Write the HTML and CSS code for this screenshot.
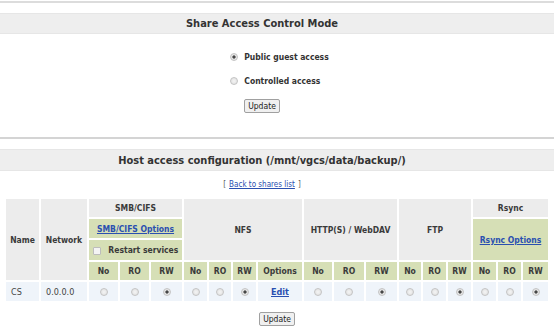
FILE: index.html
```html
<!DOCTYPE html>
<html lang="en">
<head>
  <meta charset="UTF-8" />
  <title>Share access</title>
  <link rel="stylesheet" href="styles.css">
</head>
<body>
  <div class="top-line"></div>

  <h2 class="section-title first">Share Access Control Mode</h2>
  <form class="mode-form">
    <div class="mode-options">
      <label class="mode-option"><input type="radio" name="mode" checked> Public guest access</label>
      <label class="mode-option"><input type="radio" name="mode"> Controlled access</label>
    </div>
    <button type="button" class="update-btn">Update</button>
  </form>

  <hr class="divider">

  <h2 class="section-title second">Host access configuration (/mnt/vgcs/data/backup/)</h2>
  <p class="back-link">[ <a href="#">Back to shares list</a> ]</p>

  <table class="access-table">
    <colgroup>
      <col style="width: 33px"><col style="width: 46px">
      <col style="width: 29px"><col style="width: 29px"><col style="width: 31px">
      <col style="width: 23px"><col style="width: 22px"><col style="width: 23px"><col style="width: 44px">
      <col style="width: 28px"><col style="width: 30px"><col style="width: 31px">
      <col style="width: 22px"><col style="width: 23px"><col style="width: 23px">
      <col style="width: 23px"><col style="width: 23px"><col style="width: 25px">
    </colgroup>
    <tr>
      <th rowspan="4">Name</th>
      <th rowspan="4">Network</th>
      <th colspan="3">SMB/CIFS</th>
      <th colspan="4" rowspan="3">NFS</th>
      <th colspan="3" rowspan="3">HTTP(S) / WebDAV</th>
      <th colspan="3" rowspan="3">FTP</th>
      <th colspan="3">Rsync</th>
    </tr>
    <tr>
      <th colspan="3" class="green"><a href="#">SMB/CIFS Options</a></th>
      <th colspan="3" rowspan="2" class="green"><a href="#">Rsync Options</a></th>
    </tr>
    <tr>
      <th colspan="3" class="green restart"><input type="checkbox"> Restart services</th>
    </tr>
    <tr class="sub">
      <th class="green">No</th><th class="green">RO</th><th class="green">RW</th>
      <th class="green">No</th><th class="green">RO</th><th class="green">RW</th><th class="green">Options</th>
      <th class="green">No</th><th class="green">RO</th><th class="green">RW</th>
      <th class="green">No</th><th class="green">RO</th><th class="green">RW</th>
      <th class="green">No</th><th class="green">RO</th><th class="green">RW</th>
    </tr>
    <tr class="data-row">
      <td class="left">CS</td>
      <td class="left">0.0.0.0</td>
      <td><input type="radio" name="smb"></td><td><input type="radio" name="smb"></td><td><input type="radio" name="smb" checked></td>
      <td><input type="radio" name="nfs"></td><td><input type="radio" name="nfs"></td><td><input type="radio" name="nfs" checked></td><td><a href="#" class="edit">Edit</a></td>
      <td><input type="radio" name="http"></td><td><input type="radio" name="http"></td><td><input type="radio" name="http" checked></td>
      <td><input type="radio" name="ftp"></td><td><input type="radio" name="ftp"></td><td><input type="radio" name="ftp" checked></td>
      <td><input type="radio" name="rsync"></td><td><input type="radio" name="rsync"></td><td><input type="radio" name="rsync" checked></td>
    </tr>
  </table>

  <div class="bottom-actions">
    <button type="button" class="update-btn">Update</button>
  </div>
</body>
</html>
```

FILE: styles.css
```css
* {
  box-sizing: border-box;
}

body {
  margin: 0;
  font-family: "DejaVu Sans Condensed", "DejaVu Sans", Verdana, sans-serif;
  color: #333;
  background-color: white;
}

.top-line {
  margin-top: 1px;
  height: 2px;
  background-color: #dcdcdc;
}

.section-title {
  margin: 0;
  height: 21px;
  padding-right: 30px;
  display: flex;
  align-items: center;
  justify-content: center;
  background-color: #eeeeee;
  border-top: 1px solid #e6e6e6;
  border-bottom: 1px solid #e6e6e6;
  font-size: 11px;
  font-weight: bold;
  color: #333;
}

.section-title.first {
  margin-top: 10px;
}

.section-title.second {
  margin-top: 10px;
  height: 22px;
}

.mode-form {
  display: flex;
  flex-direction: column;
  align-items: center;
  padding-top: 11px;
  padding-right: 30px;
}

.mode-options {
  display: flex;
  flex-direction: column;
  align-items: flex-start;
  margin-left: 35px;
}

.mode-option {
  display: flex;
  align-items: center;
  gap: 6px;
  height: 24px;
  font-size: 8.5px;
  font-weight: bold;
  color: #333;
}

input[type="radio"],
input[type="checkbox"] {
  appearance: none;
  -webkit-appearance: none;
  margin: 0;
  width: 8px;
  height: 8px;
  border: 1px solid #c4c4c4;
  border-radius: 50%;
  background: radial-gradient(circle, #f4f4f4 0, #dedede 100%);
  vertical-align: middle;
}

input[type="radio"]:checked {
  background: radial-gradient(circle, #333 0, #555 30%, #e8e8e8 48%, #dedede 100%);
}

input[type="checkbox"] {
  border-radius: 1px;
  background: #f4f4f4;
  border-color: #bdbdbd;
}

.update-btn {
  margin-top: 6px;
  height: 14px;
  padding: 0 3px;
  font-family: "DejaVu Sans Condensed", "DejaVu Sans", Verdana, sans-serif;
  font-size: 8.5px;
  line-height: 12px;
  color: #222;
  background-color: #f0f0f0;
  border: 1px solid #a0a0a0;
  border-radius: 2px;
}

.divider {
  margin: 24px 0 0 0;
  border: none;
  border-top: 2px solid #d4d4d4;
}

.back-link {
  margin: 0;
  height: 26px;
  padding-right: 30px;
  display: flex;
  align-items: center;
  justify-content: center;
  gap: 3px;
  font-size: 8px;
  color: #555;
}

.back-link a,
.access-table a {
  color: #2a4fb0;
}

.access-table {
  margin: 0 4px;
  table-layout: fixed;
  border-collapse: separate;
  border-spacing: 2px;
  font-size: 8.5px;
}

.access-table th {
  background-color: #ececec;
  font-weight: bold;
  color: #3a3a3a;
  height: 18px;
  padding: 0;
  text-align: center;
  white-space: nowrap;
}

.access-table th.green {
  background-color: #d6dfb6;
}

.access-table tr:nth-child(2) th {
  height: 19px;
}

.access-table th.restart {
  height: 20px;
}

.access-table th.restart input {
  margin: 0 5px 0 0;
}

.data-row td {
  background-color: #eff4fa;
  height: 19px;
  text-align: center;
  color: #444;
  font-size: 9px;
}

.data-row td.left {
  text-align: left;
  padding-left: 5px;
}

.edit {
  font-weight: bold;
}

.bottom-actions {
  display: flex;
  justify-content: center;
  padding-top: 3px;
}
```
